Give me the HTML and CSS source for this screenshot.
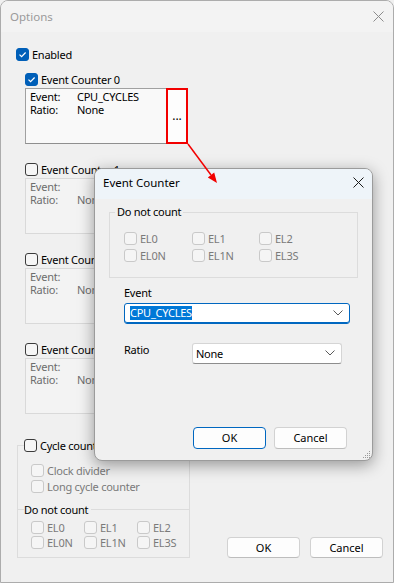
FILE: index.html
```html
<!DOCTYPE html>
<html lang="en">
  <head>
    <meta charset="UTF-8" />
    <title>Options</title>
    <link rel="stylesheet" href="styles.css">
  </head>

  <body>
    <div id="options" class="window">
      <div class="titlebar">
        <span>Options</span>
        <svg class="close" width="11" height="11" viewBox="0 0 11 11"><path d="M0.5 0.5L10.5 10.5M10.5 0.5L0.5 10.5" /></svg>
      </div>

      <div class="content">
        <label class="check checked">
          <span class="box"><svg width="11" height="11" viewBox="0 0 11 11"><path d="M2.5 5.6l2.1 2.1 4-4.2" /></svg></span>Enabled
        </label>

        <div class="counters">
          <div class="counter">
            <label class="check checked">
              <span class="box"><svg width="11" height="11" viewBox="0 0 11 11"><path d="M2.5 5.6l2.1 2.1 4-4.2" /></svg></span>Event Counter 0
            </label>
            <div class="frame">
              <div class="info">
                <span>Event:</span><span>CPU_CYCLES</span>
                <span>Ratio:</span><span>None</span>
              </div>
              <button class="more highlighted">...</button>
            </div>
          </div>

          <div class="counter">
            <label class="check"><span class="box"></span>Event Counter 1</label>
            <div class="frame disabled">
              <div class="info">
                <span>Event:</span><span></span>
                <span>Ratio:</span><span>None</span>
              </div>
            </div>
          </div>

          <div class="counter">
            <label class="check"><span class="box"></span>Event Counter 2</label>
            <div class="frame disabled">
              <div class="info">
                <span>Event:</span><span></span>
                <span>Ratio:</span><span>None</span>
              </div>
            </div>
          </div>

          <div class="counter">
            <label class="check"><span class="box"></span>Event Counter 3</label>
            <div class="frame disabled">
              <div class="info">
                <span>Event:</span><span></span>
                <span>Ratio:</span><span>None</span>
              </div>
            </div>
          </div>
        </div>

        <div class="bottom">
          <fieldset class="group cycle">
            <legend><label class="check"><span class="box"></span>Cycle count</label></legend>
            <label class="check disabled first"><span class="box"></span>Clock divider</label>
            <label class="check disabled second"><span class="box"></span>Long cycle counter</label>
            <div class="sep">Do not count</div>
            <div class="levels">
              <label class="check disabled"><span class="box"></span>EL0</label>
              <label class="check disabled"><span class="box"></span>EL1</label>
              <label class="check disabled"><span class="box"></span>EL2</label>
              <label class="check disabled"><span class="box"></span>EL0N</label>
              <label class="check disabled"><span class="box"></span>EL1N</label>
              <label class="check disabled"><span class="box"></span>EL3S</label>
            </div>
          </fieldset>

          <div class="actions">
            <button class="btn">OK</button>
            <button class="btn">Cancel</button>
          </div>
        </div>
      </div>

      <div id="event-counter" class="dialog">
        <div class="dialog-title">
          <span>Event Counter</span>
          <svg class="close active" width="11" height="11" viewBox="0 0 11 11"><path d="M0.5 0.5L10.5 10.5M10.5 0.5L0.5 10.5" /></svg>
        </div>

        <div class="dialog-body">
          <fieldset class="group exclude">
            <legend>Do not count</legend>
            <div class="levels wide">
              <label class="check disabled"><span class="box"></span>EL0</label>
              <label class="check disabled"><span class="box"></span>EL1</label>
              <label class="check disabled"><span class="box"></span>EL2</label>
              <label class="check disabled"><span class="box"></span>EL0N</label>
              <label class="check disabled"><span class="box"></span>EL1N</label>
              <label class="check disabled"><span class="box"></span>EL3S</label>
            </div>
          </fieldset>

          <div class="form">
            <div class="label">Event</div>
            <div class="combo focused event">
              <span class="selected">CPU_CYCLES</span>
              <svg width="10" height="6" viewBox="0 0 10 6"><path d="M0.5 0.5l4.5 4.5 4.5-4.5" /></svg>
            </div>

            <div class="ratio-row">
              <div class="label ratio-label">Ratio</div>
              <div class="combo ratio">
                <span>None</span>
                <svg width="10" height="6" viewBox="0 0 10 6"><path d="M0.5 0.5l4.5 4.5 4.5-4.5" /></svg>
              </div>
            </div>
          </div>

          <div class="dialog-actions">
            <button class="btn default">OK</button>
            <button class="btn">Cancel</button>
          </div>
        </div>

        <svg class="grip" width="9" height="9" viewBox="0 0 9 9">
          <rect x="7" y="1" width="1" height="1" /><rect x="5" y="3" width="1" height="1" /><rect x="7" y="3" width="1" height="1" />
          <rect x="3" y="5" width="1" height="1" /><rect x="5" y="5" width="1" height="1" /><rect x="7" y="5" width="1" height="1" />
          <rect x="1" y="7" width="1" height="1" /><rect x="3" y="7" width="1" height="1" /><rect x="5" y="7" width="1" height="1" /><rect x="7" y="7" width="1" height="1" />
        </svg>
      </div>

      <svg class="arrow" width="394" height="583" viewBox="0 0 394 583">
        <line x1="188" y1="144" x2="211" y2="175" />
        <polygon points="217,183 207.8,177.4 214.2,172.6" />
      </svg>
    </div>
  </body>
</html>
```

FILE: styles.css
```css
html {
  box-sizing: border-box;
  font-size: 11px;
  letter-spacing: -0.25px;
  font-family: "Noto Sans", "Segoe UI", sans-serif;
}
*,
*:before,
*:after {
  box-sizing: inherit;
}

body {
  margin: 0;
  padding: 0;
  background-color: #f0f0f0;
  color: #000;
}

button {
  font: inherit;
  color: inherit;
  padding: 0;
  cursor: pointer;
}

.window {
  position: relative;
  width: 394px;
  height: 583px;
  border: 1px solid #acacac;
  border-radius: 8px 8px 0 0;
  background-color: #f0f0f0;
  overflow: hidden;
}

.titlebar {
  height: 31px;
  display: flex;
  align-items: center;
  justify-content: space-between;
  padding: 0 9px 1px 9px;
  background-color: #f3f3f3;
  color: #9a9a9a;
  font-size: 11.5px;
  letter-spacing: 0;
}

.close {
  fill: none;
  stroke: #8c8c8c;
  stroke-width: 1;
}

.close.active {
  stroke: #1a1a1a;
}

.content {
  padding: 16px 10px 0 15px;
}

/* checkboxes */

.check {
  display: flex;
  align-items: center;
  gap: 3px;
  height: 13px;
  line-height: 13px;
  white-space: nowrap;
}

.box {
  width: 13px;
  height: 13px;
  flex: none;
  display: flex;
  align-items: center;
  justify-content: center;
  border: 1px solid #3b3b3b;
  border-radius: 3px;
  background-color: #f6f6f6;
}

.box svg {
  fill: none;
  stroke: #fff;
  stroke-width: 1.2;
}

.check.checked .box {
  background-color: #005fb8;
  border-color: #005fb8;
}

.check.disabled {
  color: #7a7a7a;
}

.check.disabled .box {
  border-color: #c9c9c9;
  background-color: #f5f5f5;
}

/* event counters */

.counters {
  margin: 12px 0 0 9px;
}

.counter + .counter {
  margin-top: 19px;
}

.frame {
  margin-top: 2px;
  width: 163px;
  height: 56px;
  display: flex;
  border: 1px solid;
  border-right: none;
  border-color: #a0a0a0 #a0a0a0 #8f8f8f #a0a0a0;
  background-color: #f9f9f9;
}

.frame.disabled {
  border-color: #d9d9d9;
  background-color: #f3f3f3;
  color: #6d6d6d;
}

.info {
  flex: 1;
  display: grid;
  grid-template-columns: 47px auto;
  align-content: start;
  padding: 1px 4px;
  line-height: 13px;
}

.more {
  width: 22px;
  margin: -1px 0;
  border: 1px solid #d6d6d6;
  background-color: #fdfdfd;
  font-size: 12px;
  line-height: 12px;
}

.more.highlighted {
  outline: 2px solid #f20000;
  outline-offset: -2px;
}

/* cycle counter group and footer */

.bottom {
  margin-top: 25px;
  margin-left: 1px;
  display: flex;
  justify-content: space-between;
  align-items: flex-end;
}

.group {
  margin: 0;
  min-width: 0;
  border: 1px solid #dcdcdc;
}

.cycle {
  width: 173px;
  padding: 0 8px 8px 13px;
}

.cycle legend {
  margin-left: -7px;
  padding: 0 1px 0 0;
}

.cycle .first {
  margin-top: 12px;
}

.cycle .second {
  margin-top: 3px;
}

.sep {
  display: flex;
  align-items: center;
  margin: 10px -8px 0 -13px;
  line-height: 13px;
  white-space: nowrap;
}

.sep:before {
  content: "";
  width: 6px;
  border-top: 1px solid #dcdcdc;
}

.sep:after {
  content: "";
  flex: 1;
  margin-left: 3px;
  border-top: 1px solid #dcdcdc;
}

.levels {
  margin-top: 5px;
  display: grid;
  grid-template-columns: 53px 53px auto;
  row-gap: 2px;
}

.actions {
  display: flex;
  gap: 10px;
}

.btn {
  width: 73px;
  height: 21px;
  border: 1px solid #d2d2d2;
  border-bottom-color: #bdbdbd;
  border-radius: 4px;
  background-color: #fdfdfd;
  line-height: 17px;
}

/* event counter dialog */

.dialog {
  position: absolute;
  left: 93px;
  top: 167px;
  width: 279px;
  height: 293px;
  display: flex;
  flex-direction: column;
  border: 1px solid #9b9b9b;
  border-radius: 8px;
  background-color: #f0f0f0;
  box-shadow: 0 4px 16px rgba(0, 0, 0, 0.38);
  overflow: hidden;
}

.dialog-title {
  height: 30px;
  flex: none;
  display: flex;
  align-items: center;
  justify-content: space-between;
  padding: 0 8px 3px 8px;
  background-color: #eef4f9;
  font-size: 11.5px;
  letter-spacing: 0;
}

.dialog-body {
  flex: 1;
  display: flex;
  flex-direction: column;
  padding: 5px 14px 11px 14px;
}

.exclude {
  width: 249px;
  padding: 0 0 15px 14px;
}

.exclude legend {
  margin-left: -9px;
  padding: 0 2px;
  line-height: 16px;
}

.levels.wide {
  margin-top: 12px;
  grid-template-columns: 68px 67px auto;
  row-gap: 4px;
}

.form {
  margin-left: 15px;
}

.label {
  margin-top: 7px;
  line-height: 16px;
}

.combo {
  height: 21px;
  display: flex;
  align-items: center;
  justify-content: space-between;
  padding: 0 6px 1px 3px;
  border: 1px solid #d5d5d5;
  border-bottom-color: #8d8d8d;
  border-radius: 3px;
  background-color: #fff;
}

.combo svg {
  fill: none;
  stroke: #5a5a5a;
  stroke-width: 1;
}

.combo.event {
  margin-top: 2px;
  width: 226px;
  padding-left: 5px;
}

.combo.focused {
  border-color: #0067c0;
  box-shadow: inset 0 -1px 0 #0067c0;
}

.selected {
  background-color: #0078d7;
  color: #fff;
  line-height: 14px;
}

.ratio-row {
  margin-top: 19px;
  display: flex;
  align-items: flex-start;
}

.ratio-label {
  width: 68px;
  margin-top: 0;
  line-height: 14px;
}

.combo.ratio {
  width: 150px;
}

.dialog-actions {
  margin-top: auto;
  margin-right: 11px;
  display: flex;
  justify-content: flex-end;
  gap: 8px;
}

.dialog-actions .btn {
  height: 22px;
  line-height: 18px;
}

.btn.default {
  border-color: #0067c0;
}

.grip {
  position: absolute;
  right: 1px;
  bottom: 1px;
  fill: #9a9a9a;
}

.arrow {
  position: absolute;
  left: -1px;
  top: -1px;
  pointer-events: none;
}

.arrow line {
  stroke: #f20000;
  stroke-width: 1.5;
}

.arrow polygon {
  fill: #f20000;
}
```
